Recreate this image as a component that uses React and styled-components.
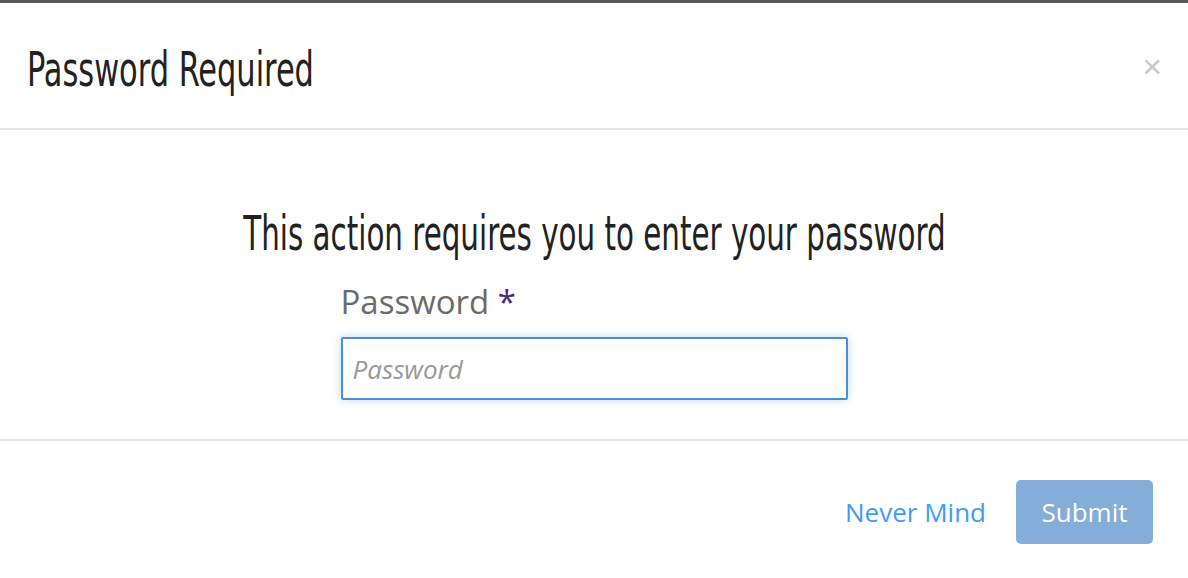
import React from "react";
import styled, { createGlobalStyle } from "styled-components";

const Global = createGlobalStyle`
  html, body {
    margin: 0;
    padding: 0;
    background: #fff;
  }
  body {
    font-family: "Open Sans", "Noto Sans", sans-serif;
  }
`;

// 전체 모달
const Modal = styled.div`
  width: 1188px;
  height: 578px;
  box-sizing: border-box;
  border-top: 3px solid #5a5a5a;
  display: flex;
  flex-direction: column;
  background: #fff;
`;

const Header = styled.div`
  height: 127px;
  box-sizing: border-box;
  border-bottom: 2px solid #e5e5e5;
  display: flex;
  align-items: center;
  justify-content: space-between;
  padding: 7px 26px 0 27px;
`;

// 제목은 좁은 글꼴 느낌을 내기 위해 가로로 줄인다
const Title = styled.h1`
  margin: 0;
  font-family: "DejaVu Sans Condensed", "DejaVu Sans", sans-serif;
  font-weight: 400;
  font-size: 48px;
  color: #222;
  transform: scaleX(0.705);
  transform-origin: left center;
  white-space: nowrap;
`;

const Close = styled.button`
  border: 0;
  background: none;
  padding: 0;
  margin-top: -7px;
  font-family: "Liberation Sans", sans-serif;
  font-size: 34px;
  line-height: 1;
  color: #c8c8c8;
  cursor: pointer;
`;

const Body = styled.div`
  height: 311px;
  box-sizing: border-box;
  border-bottom: 2px solid #e5e5e5;
  display: flex;
  flex-direction: column;
  align-items: center;
  padding-top: 73px;
`;

const Prompt = styled.h2`
  margin: 0;
  font-family: "DejaVu Sans Condensed", "DejaVu Sans", sans-serif;
  font-weight: 400;
  font-size: 48px;
  line-height: 60px;
  color: #222;
  transform: scaleX(0.68);
  white-space: nowrap;
`;

const Field = styled.div`
  width: 507px;
  margin-top: 17px;
  display: flex;
  flex-direction: column;
`;

const Label = styled.label`
  font-size: 33px;
  line-height: 44px;
  color: #6b6b6b;
  margin-bottom: 13px;
`;

const Required = styled.span`
  color: #4b2a7c;
`;

const Input = styled.input`
  height: 63px;
  box-sizing: border-box;
  border: 2px solid #4a90d9;
  border-radius: 2px;
  padding: 0 10px;
  font-family: "Open Sans", sans-serif;
  font-size: 26px;
  outline: none;
  box-shadow: 0 0 10px rgba(74, 144, 217, 0.35);
  &::placeholder {
    font-style: italic;
    color: #999;
  }
`;

const Footer = styled.div`
  flex: 1;
  display: flex;
  align-items: center;
  justify-content: flex-end;
  gap: 30px;
  padding: 5px 35px 0 0;
`;

const LinkButton = styled.button`
  border: 0;
  background: none;
  padding: 0;
  font-family: "Open Sans", sans-serif;
  font-size: 26px;
  color: #3f9cf2;
  cursor: pointer;
`;

const Submit = styled.button`
  width: 137px;
  height: 64px;
  border: 0;
  border-radius: 5px;
  background: #84add7;
  color: #fff;
  font-family: "Open Sans", sans-serif;
  font-size: 26px;
  cursor: pointer;
`;

const App = () => (
  <>
    <Global />
    <Modal>
      <Header>
        <Title>Password Required</Title>
        <Close aria-label="close">×</Close>
      </Header>
      <Body>
        <Prompt>This action requires you to enter your password</Prompt>
        <Field>
          <Label>
            Password <Required>*</Required>
          </Label>
          <Input type="password" placeholder="Password" />
        </Field>
      </Body>
      <Footer>
        <LinkButton>Never Mind</LinkButton>
        <Submit>Submit</Submit>
      </Footer>
    </Modal>
  </>
);

export default App;
